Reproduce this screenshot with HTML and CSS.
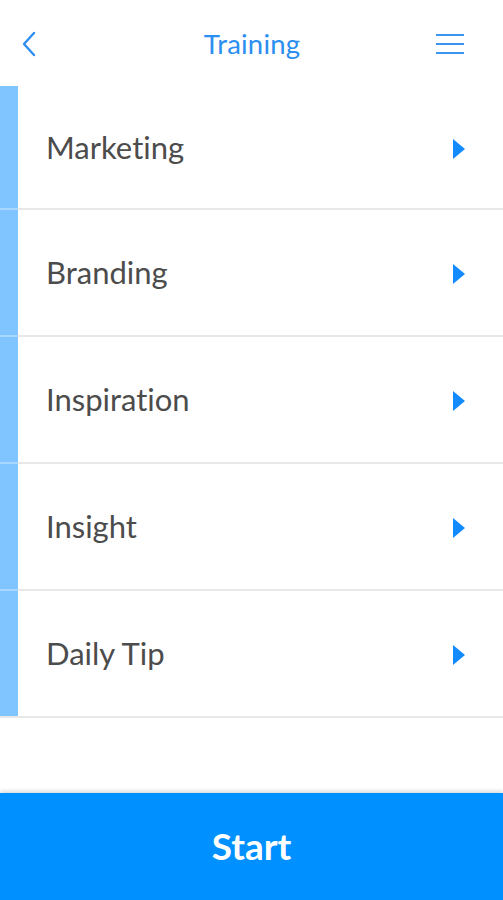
FILE: index.html
```html
<!DOCTYPE html>
<html>
<head>
<meta charset="utf-8">
<link rel="stylesheet" href="styles.css">
</head>
<body>
<div class="app">
  <header class="topbar">
    <svg class="back" width="16" height="26" viewBox="0 0 16 26"><path d="M13 2 L3 13 L13 24" fill="none" stroke="#2f8ef0" stroke-width="2.4" stroke-linecap="round" stroke-linejoin="round"/></svg>
    <div class="title">Training</div>
    <svg class="menu" width="30" height="22" viewBox="0 0 30 22"><path d="M1 2 H29 M1 11 H29 M1 20 H29" stroke="#3b95ee" stroke-width="2.2"/></svg>
  </header>
  <ul class="list">
    <li class="row"><span class="stripe"></span><span class="label">Marketing</span><span class="arrow"></span></li>
    <li class="row"><span class="stripe"></span><span class="label">Branding</span><span class="arrow"></span></li>
    <li class="row"><span class="stripe"></span><span class="label">Inspiration</span><span class="arrow"></span></li>
    <li class="row"><span class="stripe"></span><span class="label">Insight</span><span class="arrow"></span></li>
    <li class="row"><span class="stripe"></span><span class="label">Daily Tip</span><span class="arrow"></span></li>
  </ul>
  <footer class="start">Start</footer>
</div>
</body>
</html>
```
FILE: styles.css
```css
* { box-sizing: border-box; }
html, body { margin: 0; padding: 0; background: #fff; }
body { font-family: Lato, "Open Sans", sans-serif; font-variant-ligatures: none; }
.app { height: 900px; display: flex; flex-direction: column; }
.topbar {
  height: 86px;
  display: flex;
  align-items: center;
  justify-content: space-between;
  padding: 0 38px 0 21px;
}
.back { display: block; margin-top: 1px; }
.title { color: #2b8ef0; font-size: 27.5px; letter-spacing: 0.2px; margin-left: 32px; }
.menu { display: block; margin-top: 1px; }
.list { list-style: none; margin: 0; padding: 0; }
.row {
  height: 127px;
  display: flex;
  align-items: center;
  border-bottom: 2px solid #e8e8e8;
}
.row:first-child { height: 124px; }
.stripe {
  align-self: stretch;
  width: 18px;
  background: #80c5ff;
  margin-bottom: -2px;
  border-bottom: 2px solid #a9d8ff;
}
.row:last-child .stripe { margin-bottom: 0; border-bottom: 0; }
.label {
  flex: 1;
  padding-left: 28px;
  font-size: 31px;
  color: #4c4c4c;
  margin-top: -1px;
}
.arrow {
  width: 0; height: 0;
  border-top: 10px solid transparent;
  border-bottom: 10px solid transparent;
  border-left: 12px solid #148aff;
  margin-right: 38px;
  margin-top: 3px;
}
.start {
  margin-top: auto;
  height: 107px;
  background: #0090ff;
  color: #fff;
  font-weight: bold;
  font-size: 37px;
  display: flex;
  align-items: center;
  justify-content: center;
  box-shadow: 0 -2px 4px rgba(0,0,0,0.15);
  padding-bottom: 2px;
}
```
